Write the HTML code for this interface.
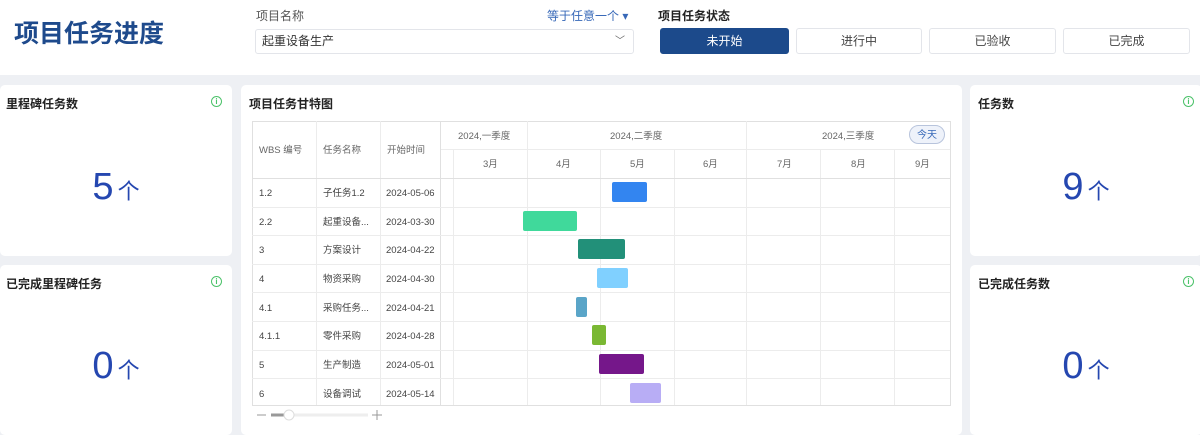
<!DOCTYPE html>
<html><head><meta charset="utf-8"><style>
*{margin:0;padding:0;box-sizing:border-box}
body{width:1200px;height:429px;overflow:hidden;background:#eef0f4;font-family:"Liberation Sans","Noto Sans CJK SC",sans-serif;position:relative;color:#333}
.a{position:absolute}
.hdr{left:0;top:0;width:1200px;height:75px;background:#fff}
.card{background:#fff;border-radius:5px}
.ct{font-size:12px;font-weight:bold;color:#222}
.info{width:11px;height:11px;border:1.3px solid #4cc26a;border-radius:50%;color:#4cc26a;font-size:8px;line-height:9px;text-align:center;font-weight:bold}
.big{font-size:38px;color:#2547b0;text-align:center;line-height:40px}
.big span{font-size:22px;margin-left:4px}
.btn{top:28px;height:26px;border:1px solid #e3e5ea;border-radius:3px;font-size:12px;text-align:center;line-height:24px;color:#444;background:#fff}
</style></head><body>
<div class="a hdr"></div>
<div class="a" style="left:14px;top:14px;font-size:25px;font-weight:bold;color:#1e4a8c">项目任务进度</div>
<div class="a" style="left:256px;top:7px;font-size:12px;color:#555">项目名称</div>
<div class="a" style="left:547px;top:7px;font-size:12px;color:#3768b8">等于任意一个 ▾</div>
<div class="a" style="left:255px;top:29px;width:379px;height:25px;border:1px solid #e3e5ea;border-radius:3px;font-size:12px;line-height:23px;padding-left:6px;color:#333">起重设备生产<span style="position:absolute;right:8px;top:0;color:#666;font-size:10px">﹀</span></div>
<div class="a" style="left:658px;top:7px;font-size:12px;font-weight:bold;color:#222">项目任务状态</div>
<div class="a btn" style="left:660px;width:129px;background:#1c4a8b;border-color:#1c4a8b;color:#fff">未开始</div>
<div class="a btn" style="left:796px;width:126px">进行中</div>
<div class="a btn" style="left:929px;width:127px">已验收</div>
<div class="a btn" style="left:1063px;width:127px">已完成</div>

<div class="a card" style="left:0;top:85px;width:232px;height:171px"></div>
<div class="a ct" style="left:6px;top:95px">里程碑任务数</div>
<div class="a info" style="left:211px;top:96px">i</div>
<div class="a big" style="left:0;top:167px;width:232px">5<span>个</span></div>
<div class="a card" style="left:0;top:265px;width:232px;height:170px"></div>
<div class="a ct" style="left:6px;top:275px">已完成里程碑任务</div>
<div class="a info" style="left:211px;top:276px">i</div>
<div class="a big" style="left:0;top:346px;width:232px">0<span>个</span></div>

<div class="a card" style="left:970px;top:85px;width:232px;height:171px"></div>
<div class="a ct" style="left:978px;top:95px">任务数</div>
<div class="a info" style="left:1183px;top:96px">i</div>
<div class="a big" style="left:970px;top:167px;width:232px">9<span>个</span></div>
<div class="a card" style="left:970px;top:265px;width:232px;height:170px"></div>
<div class="a ct" style="left:978px;top:275px">已完成任务数</div>
<div class="a info" style="left:1183px;top:276px">i</div>
<div class="a big" style="left:970px;top:346px;width:232px">0<span>个</span></div>

<div class="a card" style="left:241px;top:85px;width:721px;height:350px"></div>
<div class="a ct" style="left:249px;top:95px">项目任务甘特图</div>
<svg class="a" style="left:0;top:0" width="1200" height="429">
<g stroke="#ececec" stroke-width="1" fill="none">
<rect x="252.5" y="121.5" width="698" height="284" stroke="#e0e0e0"/>
<line x1="316.5" y1="121" x2="316.5" y2="405"/><line x1="380.5" y1="121" x2="380.5" y2="405"/><line x1="440.5" y1="121" x2="440.5" y2="405" stroke="#e0e0e0"/>
<line x1="441" y1="149.5" x2="950" y2="149.5"/>
<line x1="527.5" y1="121" x2="527.5" y2="405"/><line x1="746.5" y1="121" x2="746.5" y2="405"/>
<line x1="453.5" y1="149" x2="453.5" y2="405"/><line x1="600.5" y1="149" x2="600.5" y2="405"/><line x1="674.5" y1="149" x2="674.5" y2="405"/><line x1="820.5" y1="149" x2="820.5" y2="405"/><line x1="894.5" y1="149" x2="894.5" y2="405"/>
<line x1="252" y1="178.5" x2="950" y2="178.5" stroke="#e0e0e0"/>
<line x1="252" y1="207.5" x2="950" y2="207.5"/><line x1="252" y1="235.5" x2="950" y2="235.5"/><line x1="252" y1="264.5" x2="950" y2="264.5"/><line x1="252" y1="292.5" x2="950" y2="292.5"/><line x1="252" y1="321.5" x2="950" y2="321.5"/><line x1="252" y1="350.5" x2="950" y2="350.5"/><line x1="252" y1="378.5" x2="950" y2="378.5"/>
</g>
<g font-family="Liberation Sans,Noto Sans CJK SC,sans-serif" font-size="9.5" fill="#666">
<text x="259" y="153">WBS 编号</text><text x="323" y="153">任务名称</text><text x="387" y="153">开始时间</text>
<text x="458" y="139">2024,一季度</text><text x="610" y="139">2024,二季度</text><text x="822" y="139">2024,三季度</text>
<text x="483" y="167">3月</text><text x="556" y="167">4月</text><text x="630" y="167">5月</text><text x="703" y="167">6月</text><text x="777" y="167">7月</text><text x="851" y="167">8月</text><text x="915" y="167">9月</text>
</g>
<rect x="909.5" y="125.5" width="35" height="18" rx="9" fill="#eef2fa" stroke="#b8c4dc"/>
<text x="927" y="138" font-size="10" text-anchor="middle" fill="#3768b8" font-family="Noto Sans CJK SC,sans-serif">今天</text>
<g font-family="Liberation Sans,Noto Sans CJK SC,sans-serif" font-size="9.5" fill="#444">
<text x="259" y="196">1.2</text><text x="323" y="196">子任务1.2</text><text x="386" y="196">2024-05-06</text>
<text x="259" y="225">2.2</text><text x="323" y="225">起重设备...</text><text x="386" y="225">2024-03-30</text>
<text x="259" y="253">3</text><text x="323" y="253">方案设计</text><text x="386" y="253">2024-04-22</text>
<text x="259" y="282">4</text><text x="323" y="282">物资采购</text><text x="386" y="282">2024-04-30</text>
<text x="259" y="311">4.1</text><text x="323" y="311">采购任务...</text><text x="386" y="311">2024-04-21</text>
<text x="259" y="339">4.1.1</text><text x="323" y="339">零件采购</text><text x="386" y="339">2024-04-28</text>
<text x="259" y="368">5</text><text x="323" y="368">生产制造</text><text x="386" y="368">2024-05-01</text>
<text x="259" y="397">6</text><text x="323" y="397">设备调试</text><text x="386" y="397">2024-05-14</text>
</g>
<rect x="612" y="182" width="35" height="20" rx="2" fill="#3385f0"/>
<rect x="523" y="211" width="54" height="20" rx="2" fill="#40d99b"/>
<rect x="578" y="239" width="47" height="20" rx="2" fill="#229079"/>
<rect x="597" y="268" width="31" height="20" rx="2" fill="#80d0ff"/>
<rect x="576" y="297" width="11" height="20" rx="2" fill="#5aa5c8"/>
<rect x="592" y="325" width="14" height="20" rx="2" fill="#7ab833"/>
<rect x="599" y="354" width="45" height="20" rx="2" fill="#75178a"/>
<rect x="630" y="383" width="31" height="20" rx="2" fill="#b8adf5"/>
<line x1="257" y1="415" x2="266" y2="415" stroke="#999"/>
<line x1="271" y1="415" x2="368" y2="415" stroke="#eee" stroke-width="3"/>
<line x1="271" y1="415" x2="289" y2="415" stroke="#999" stroke-width="3"/>
<circle cx="289" cy="415" r="5" fill="#fff" stroke="#ddd"/>
<path d="M372 415h10M377 410v10" stroke="#999"/>
</svg>
</body></html>
